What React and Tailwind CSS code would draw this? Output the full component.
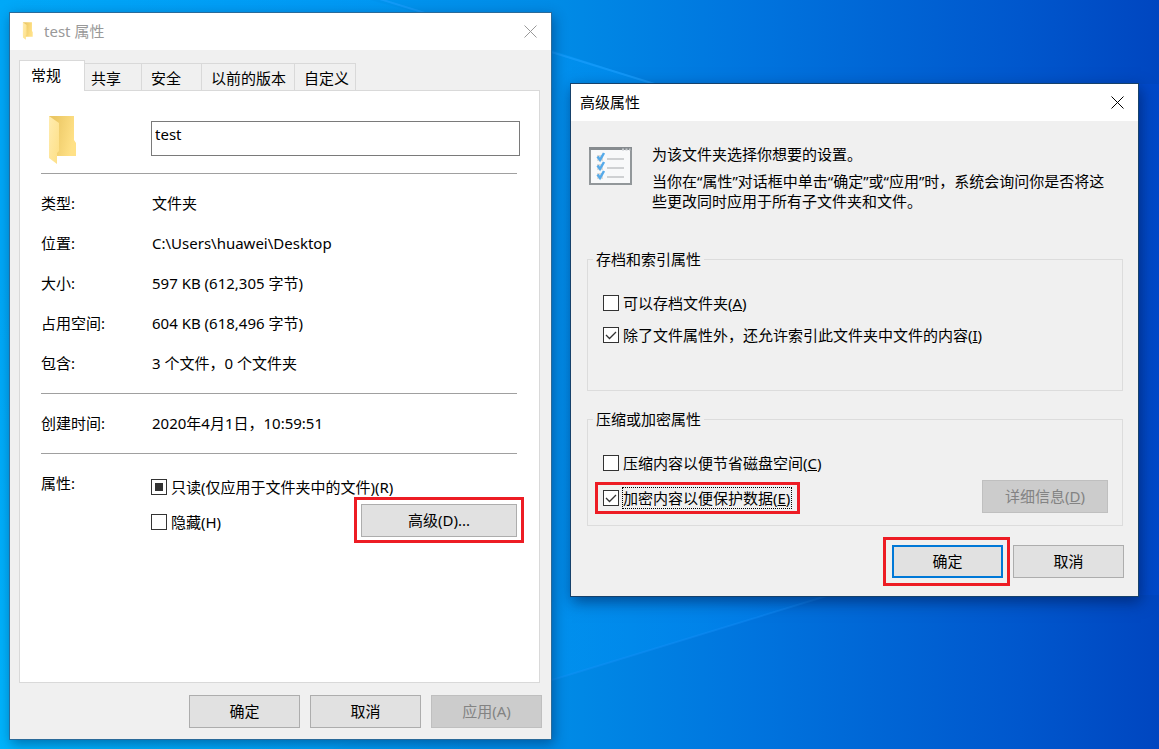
import { useEffect, useRef, useState } from 'react';

const TABS = ['常规', '共享', '安全', '以前的版本', '自定义'];

const TAB_WIDTHS = ['w-[66px] pl-[11px]', 'w-[57px] pl-[6px]', 'w-[60px] pl-[9px]', 'w-[93px] pl-[9px]', 'w-[61px] pl-[9px]'];

const DETAILS = [
  ['类型:', '文件夹'],
  ['位置:', 'C:\\Users\\huawei\\Desktop'],
  ['大小:', '597 KB (612,305 字节)'],
  ['占用空间:', '604 KB (618,496 字节)'],
  ['包含:', '3 个文件，0 个文件夹'],
];

const Wallpaper = () => (
  <svg className="absolute inset-0 h-full w-full" viewBox="0 0 1159 749" preserveAspectRatio="none" aria-hidden="true">
    <defs>
      <linearGradient id="sky" x1="0" y1="0" x2="1" y2="0">
        <stop offset="0" stopColor="#00a8f7" />
        <stop offset="0.25" stopColor="#0098f2" />
        <stop offset="0.48" stopColor="#008be6" />
        <stop offset="0.65" stopColor="#0074de" />
        <stop offset="0.75" stopColor="#0067d6" />
        <stop offset="0.88" stopColor="#0057cd" />
        <stop offset="1" stopColor="#0046c0" />
      </linearGradient>
      <linearGradient id="glow" x1="0" y1="0" x2="1" y2="0">
        <stop offset="0" stopColor="#00a8f7" stopOpacity="0.3" />
        <stop offset="0.6" stopColor="#0098ff" stopOpacity="0.3" />
        <stop offset="1" stopColor="#0050e8" stopOpacity="0.2" />
      </linearGradient>
      <radialGradient id="corner" gradientUnits="userSpaceOnUse" cx="0" cy="749" r="480">
        <stop offset="0" stopColor="#00baff" stopOpacity="0.7" />
        <stop offset="1" stopColor="#00baff" stopOpacity="0" />
      </radialGradient>
    </defs>
    <rect width="1159" height="749" fill="url(#sky)" />
    <path d="M0 0H370L552 50L655 84H1159V595H830L552 680L330 749H0Z" fill="url(#glow)" />
    <rect width="1159" height="749" fill="url(#corner)" />
    <path d="M370 -4 L 700 98" stroke="#1ea0ff" strokeWidth="2" opacity="0.6" />
    <path d="M552 680 L 830 595" stroke="#1e96ff" strokeWidth="2" opacity="0.3" />
  </svg>
);

const FolderIcon = ({ className }) => (
  <svg className={className} viewBox="0 0 28 50" aria-hidden="true">
    <defs>
      <linearGradient id="back" x1="0" y1="0" x2="1" y2="0.3">
        <stop offset="0.2" stopColor="#ebc764" />
        <stop offset="1" stopColor="#ffe187" />
      </linearGradient>
      <linearGradient id="front" x1="0" y1="0" x2="1" y2="1">
        <stop offset="0" stopColor="#ffecb0" />
        <stop offset="1" stopColor="#fddf85" />
      </linearGradient>
    </defs>
    <path d="M0 1H25V25L27 28V41H3L0 38Z" fill="url(#back)" />
    <path d="M0 1L10 8V36L8 38V49L0 43Z" fill="url(#front)" />
  </svg>
);

const SettingsListIcon = () => (
  <svg className="mt-[3px] h-[38px] w-[43px] shrink-0" viewBox="0 0 43 38" aria-hidden="true">
    <rect x="1" y="1" width="41" height="36" fill="#f8f9fa" stroke="#92979a" strokeWidth="2" />
    <path d="M0 1.500H43" stroke="#868b8f" strokeWidth="3" />
    <path d="M33 2.500h2M36.500 2.500h2M40 2.500h1.500" stroke="#c4c8cb" strokeWidth="2" />
    <path d="M18 12H35M18 21H35M18 30H35" stroke="#cfd1d3" strokeWidth="2" />
    <path d="M8 8h6v6H8zM8 17h6v6H8zM8 26h6v6H8z" fill="#dddcd9" />
    <path d="M8.500 9.500l2.500 3.500 4-7M8.500 18.500l2.500 3.500 4-7M8.500 27.500l2.500 3.500 4-7" fill="none" stroke="#55aaea" strokeWidth="2.500" />
  </svg>
);

const CloseButton = () => (
  <button type="button" aria-label="关闭" className="p-1">
    <svg className="h-[13px] w-[13px]" viewBox="0 0 13 13" aria-hidden="true">
      <path d="M0.500 0.500L12.500 12.500M12.500 0.500L0.500 12.500" stroke="currentColor" />
    </svg>
  </button>
);

const Button = ({ children, className = 'w-[111px] border border-[#adadad]', disabled }) => (
  <button
    type="button"
    disabled={disabled}
    className={`h-[33px] bg-[#e1e1e1] pb-px text-center disabled:border-[#bfbfbf] disabled:bg-[#cccccc] disabled:text-[#838383] ${className}`}
  >
    {children}
  </button>
);

const Highlight = ({ children, className }) => (
  <div className={`border-3 border-[#ed1c24] ${className}`}>{children}</div>
);

const CheckBox = ({ children, checked = false, mixed = false, focused = false }) => {
  const [on, setOn] = useState(checked);
  const ref = useRef(null);

  useEffect(() => {
    ref.current.indeterminate = mixed;
  }, [mixed]);

  return (
    <label className="flex items-center gap-[3px]">
      <span className="relative flex h-4 w-4 shrink-0">
        <input
          ref={ref}
          type="checkbox"
          checked={on}
          onChange={(e) => setOn(e.target.checked)}
          className="h-4 w-4 appearance-none border border-[#333] bg-white"
        />
        {mixed && <span className="pointer-events-none absolute inset-1 bg-[#333]" />}
        {on && (
          <svg className="pointer-events-none absolute inset-0 h-4 w-4" viewBox="0 0 16 16" aria-hidden="true">
            <path d="M3 8L6.500 11.500L13 5" fill="none" stroke="#333" strokeWidth="1.300" />
          </svg>
        )}
      </span>
      <span className={`whitespace-nowrap border border-dotted leading-5 ${focused ? 'border-black pr-px' : 'border-transparent'}`}>
        {children}
      </span>
    </label>
  );
};

const PropertiesWindow = () => {
  const [tab, setTab] = useState(0);
  const [name, setName] = useState('test');

  return (
    <section className="absolute left-[9px] top-3 flex w-[543px] flex-col border border-[#2a6a99] bg-[#f0f0f0] shadow-[2px_4px_12px_rgba(0,30,80,0.45)]">
      <header className="flex h-[37px] items-center bg-white pb-px pl-3 pr-2.5 text-[#999]">
        <FolderIcon className="h-[18px] w-3" />
        <h1 className="ml-2.5 grow">test 属性</h1>
        <CloseButton />
      </header>

      <div className="flex flex-col pb-[11px] pl-[9px] pr-[11px] pt-2.5">
        <div role="tablist" className="flex items-end">
          {TABS.map((label, i) => (
            <button
              key={label}
              type="button"
              role="tab"
              aria-selected={tab === i}
              onClick={() => setTab(i)}
              className={`whitespace-nowrap border-r border-t border-[#d9d9d9] text-left ${TAB_WIDTHS[i]} ${
                tab === i ? 'relative z-10 -mb-px h-[31px] border-l bg-white pb-0.5' : 'h-[27px] pt-0.5'
              }`}
            >
              {label}
            </button>
          ))}
        </div>

        <div role="tabpanel" className="flex h-[593px] flex-col border border-[#d9d9d9] bg-white pl-[21px] pr-[22px] pt-6">
          <div className="flex h-[59px] items-start border-b border-[#a0a0a0]">
            <FolderIcon className="ml-2 h-[50px] w-7" />
            <input
              aria-label="名称"
              value={name}
              onChange={(e) => setName(e.target.value)}
              className="-mr-[3px] ml-[74px] mt-1.5 h-[35px] min-w-0 grow border border-[#7a7a7a] bg-white pb-2.5 pl-[3px] outline-none"
            />
          </div>

          <dl className="flex h-[220px] flex-col border-b border-[#a0a0a0] pt-[9px]">
            {DETAILS.map(([label, value]) => (
              <div key={label} className="flex h-10 items-center">
                <dt className="w-[111px]">{label}</dt>
                <dd>{value}</dd>
              </div>
            ))}
          </dl>

          <dl className="flex h-[60px] items-center border-b border-[#a0a0a0] pb-px">
            <dt className="w-[111px]">创建时间:</dt>
            <dd>2020年4月1日，10:59:51</dd>
          </dl>

          <div className="flex pt-[19px]">
            <span className="w-[110px]">属性:</span>
            <div className="flex grow flex-col gap-[13px] pt-[3px]">
              <CheckBox mixed>只读(仅应用于文件夹中的文件)(R)</CheckBox>
              <CheckBox>隐藏(H)</CheckBox>
            </div>
          </div>
          <Highlight className="-mr-[7px] -mt-9 self-end px-1 pb-[3px] pt-1">
            <Button className="block w-[156px] border border-[#adadad]">高级(D)...</Button>
          </Highlight>
        </div>

        <div className="-mr-[2px] mt-3 flex justify-end gap-2.5">
          <Button>确定</Button>
          <Button>取消</Button>
          <Button disabled>应用(A)</Button>
        </div>
      </div>
    </section>
  );
};

const AdvancedWindow = () => (
  <section className="absolute left-[570px] top-[83px] flex w-[569px] flex-col border border-[#16416b] bg-[#f0f0f0] shadow-[2px_5px_14px_rgba(0,20,70,0.55)]">
    <header className="flex h-[37px] items-center bg-white pb-px pl-[9px] pr-2.5">
      <h2 className="grow">高级属性</h2>
      <CloseButton />
    </header>

    <div className="flex flex-col px-[15px] pb-2.5">
      <div className="flex h-[127px] gap-5 pl-[3px] pt-[23px]">
        <SettingsListIcon />
        <div className="flex w-[464px] flex-col gap-[7px] leading-5">
          <p>为该文件夹选择你想要的设置。</p>
          <p>当你在“属性”对话框中单击“确定”或“应用”时，系统会询问你是否将这些更改同时应用于所有子文件夹和文件。</p>
        </div>
      </div>

      <fieldset className="ml-px h-[143px] min-w-0 border border-[#dcdcdc] px-[5px]">
        <legend className="px-[3px] leading-[22px]">存档和索引属性</legend>
        <div className="flex flex-col gap-2.5 pl-2.5 pt-[22px]">
          <CheckBox>可以存档文件夹(<u>A</u>)</CheckBox>
          <CheckBox checked>除了文件属性外，还允许索引此文件夹中文件的内容(<u>I</u>)</CheckBox>
        </div>
      </fieldset>

      <fieldset className="ml-px mt-[17px] h-[118px] min-w-0 border border-[#dcdcdc] pl-[5px] pr-3.5">
        <legend className="px-[3px] leading-[22px]">压缩或加密属性</legend>
        <div className="pl-2.5 pt-[22px]">
          <CheckBox>压缩内容以便节省磁盘空间(<u>C</u>)</CheckBox>
        </div>
        <div className="flex items-start justify-between pl-0.5 pt-1.5">
          <Highlight className="mt-0.5 px-[5px] py-[2px]">
            <CheckBox checked focused>加密内容以便保护数据(<u>E</u>)</CheckBox>
          </Highlight>
          <Button disabled className="w-[126px] border border-[#bfbfbf]">详细信息(<u>D</u>)</Button>
        </div>
      </fieldset>

      <div className="-mr-px mt-[11px] flex items-center justify-end gap-[3px]">
        <Highlight className="py-[5px] pl-1.5 pr-1">
          <Button className="block w-[111px] border-2 border-[#0078d7]">确定</Button>
        </Highlight>
        <Button>取消</Button>
      </div>
    </div>
  </section>
);

const App = () => (
  <main className="relative min-h-screen overflow-hidden bg-[#0087ea] font-['Noto_Sans','Noto_Sans_CJK_SC',sans-serif] text-[15px] leading-5 text-black">
    <Wallpaper />
    <PropertiesWindow />
    <AdvancedWindow />
  </main>
);

export default App;
